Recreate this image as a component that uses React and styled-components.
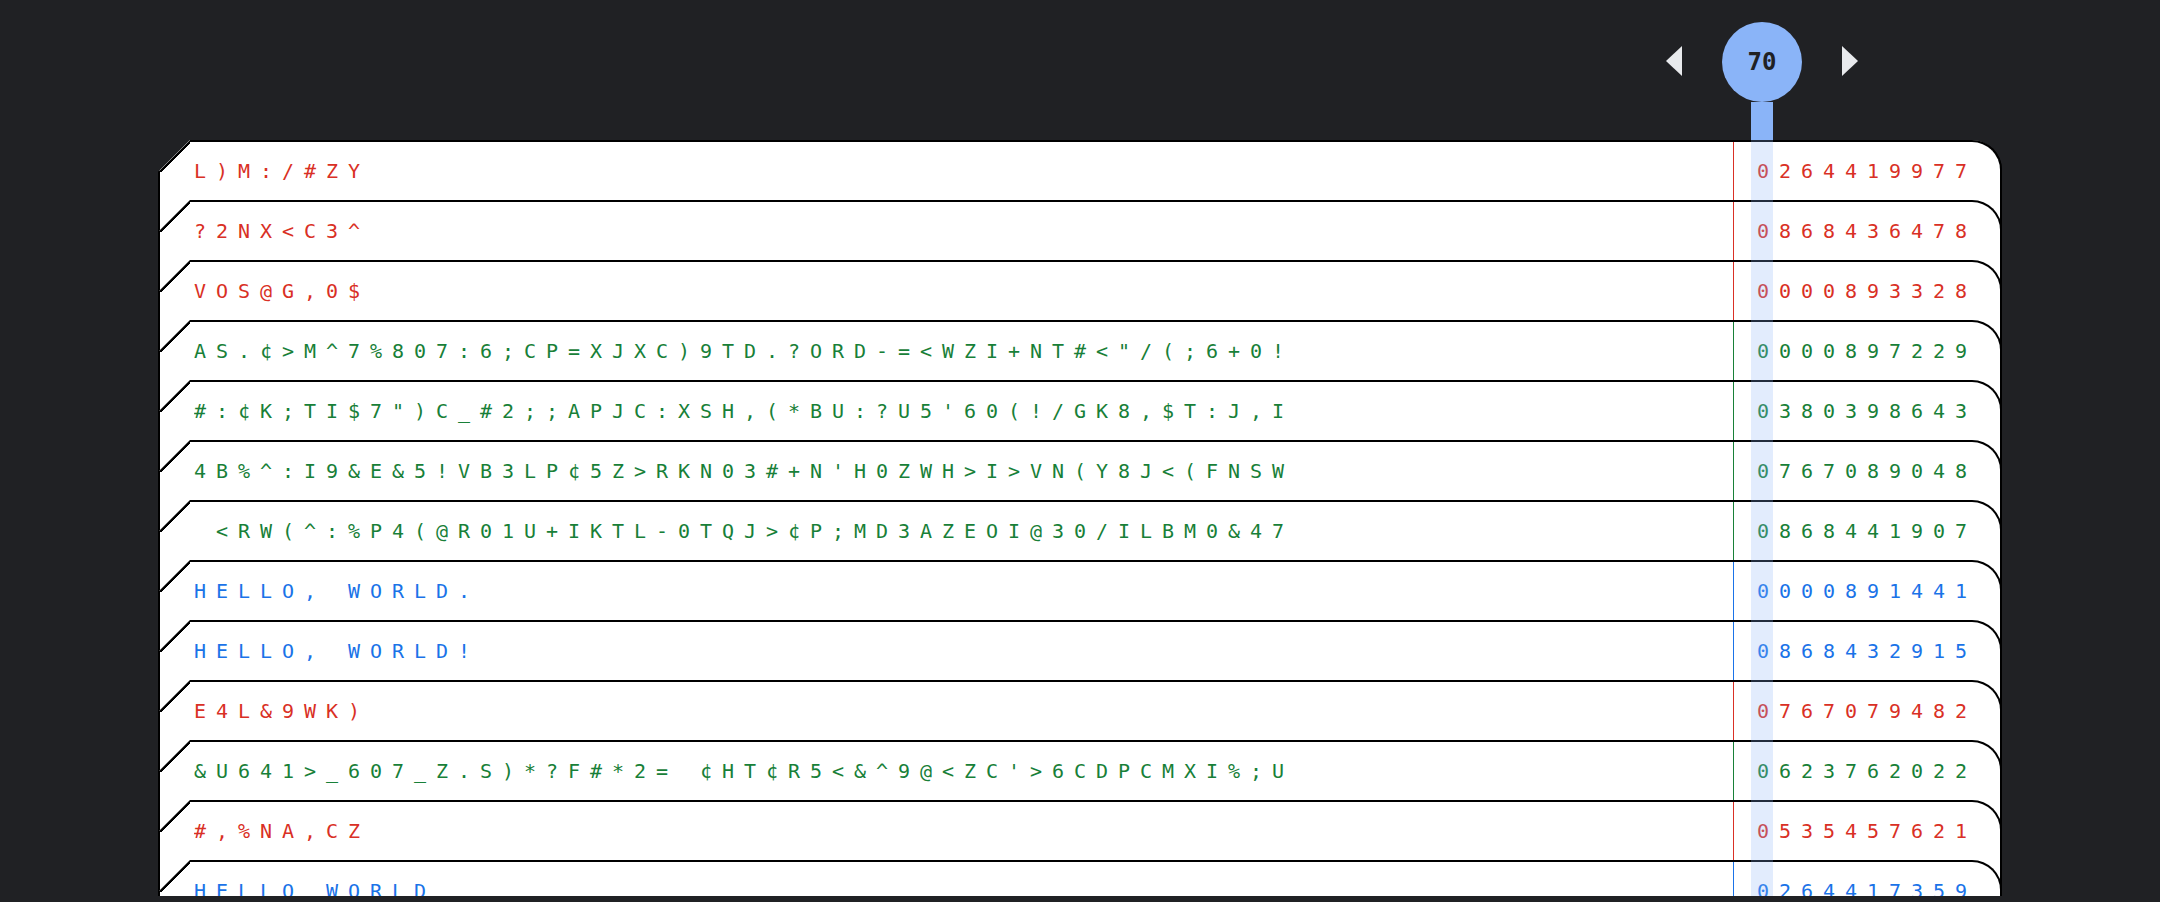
import React from "react";
import styled, { createGlobalStyle } from "styled-components";

const tones = {
  red: "#d93025",
  green: "#188038",
  blue: "#1a73e8",
};

const rows = [
  { text: "L)M:/#ZY", num: "0264419977", tone: "red" },
  { text: "?2NX<C3^", num: "0868436478", tone: "red" },
  { text: "VOS@G,0$", num: "0000893328", tone: "red" },
  { text: "AS.¢>M^7%807:6;CP=XJXC)9TD.?ORD-=<WZI+NT#<\"/(;6+0!", num: "0000897229", tone: "green" },
  { text: "#:¢K;TI$7\")C_#2;;APJC:XSH,(*BU:?U5'60(!/GK8,$T:J,I", num: "0380398643", tone: "green" },
  { text: "4B%^:I9&E&5!VB3LP¢5Z>RKN03#+N'H0ZWH>I>VN(Y8J<(FNSW", num: "0767089048", tone: "green" },
  { text: " <RW(^:%P4(@R01U+IKTL-0TQJ>¢P;MD3AZEOI@30/ILBM0&47", num: "0868441907", tone: "green" },
  { text: "HELLO, WORLD.", num: "0000891441", tone: "blue" },
  { text: "HELLO, WORLD!", num: "0868432915", tone: "blue" },
  { text: "E4L&9WK)", num: "0767079482", tone: "red" },
  { text: "&U641>_607_Z.S)*?F#*2= ¢HT¢R5<&^9@<ZC'>6CDPCMXI%;U", num: "0623762022", tone: "green" },
  { text: "#,%NA,CZ", num: "0535457621", tone: "red" },
  { text: "HELLO WORLD", num: "0264417359", tone: "blue" },
];

const GlobalStyle = createGlobalStyle`
  html, body {
    margin: 0;
    padding: 0;
    background: #202124;
    overflow: hidden;
  }
`;

const Page = styled.div`
  height: 896px;
  overflow: hidden;
  background: #202124;
  font-family: "DejaVu Sans Mono", "Liberation Mono", monospace;
`;

const Toolbar = styled.header`
  height: 140px;
  box-sizing: border-box;
  display: flex;
  justify-content: flex-end;
  align-items: flex-start;
  gap: 40px;
  padding-right: 302px;
`;

const Arrow = styled.button`
  width: 0;
  height: 0;
  padding: 0;
  margin-top: 46px;
  background: none;
  cursor: pointer;
  border-top: 15px solid transparent;
  border-bottom: 15px solid transparent;
  border-left: ${(p) => (p.$dir === "right" ? "16px solid #e8eaed" : "0")};
  border-right: ${(p) => (p.$dir === "left" ? "16px solid #e8eaed" : "0")};
`;

const Pin = styled.div`
  display: flex;
  flex-direction: column;
  align-items: center;
  margin-top: 22px;
`;

const Bubble = styled.div`
  width: 80px;
  height: 80px;
  border-radius: 50%;
  background: #8ab4f8;
  display: flex;
  align-items: center;
  justify-content: center;
  color: #202124;
  font-size: 24px;
  font-weight: 700;
`;

const Stem = styled.div`
  width: 22px;
  height: 38px;
  background: #8ab4f8;
`;

const Body = styled.div`
  position: relative;
`;

const Sheet = styled.div`
  margin: 0 158px;
  background: #fff;
  border-left: 2px solid #000;
  border-right: 2px solid #000;
  border-top-right-radius: 30px;
  clip-path: polygon(32px 0, 100% 0, 100% 100%, 0 100%, 0 32px);
`;

const Row = styled.div`
  height: 60px;
  box-sizing: border-box;
  display: flex;
  align-items: stretch;
  margin: 0 -2px;
  padding: 0 23px 0 34px;
  border: 2px solid #000;
  border-bottom: 0;
  border-top-right-radius: 30px;
  background:
    linear-gradient(135deg, transparent 50%, #000 50%, #000 calc(50% + 2.6px), transparent calc(50% + 2.6px)) 0 0 / 32px 32px no-repeat border-box,
    #fff;
  clip-path: polygon(32px 0, 100% 0, 100% 100%, 0 100%, 0 32px);
  color: ${(p) => tones[p.$tone]};
  font-size: 20px;
  letter-spacing: 9.96px;
  white-space: pre;
`;

const Text = styled.span`
  flex: 1;
  align-self: center;
  overflow: hidden;
`;

const Divider = styled.span`
  width: 1px;
  margin-right: 23px;
  background: ${(p) => tones[p.$tone]};
`;

const Num = styled.span`
  width: 220px;
  align-self: center;
`;

const Cursor = styled.div`
  position: absolute;
  top: 0;
  bottom: 0;
  left: 1751px;
  width: 22px;
  background: rgba(138, 180, 248, 0.25);
  pointer-events: none;
`;

export default function App() {
  return (
    <Page>
      <GlobalStyle />
      <Toolbar>
        <Arrow $dir="left" aria-label="previous" />
        <Pin>
          <Bubble>70</Bubble>
          <Stem />
        </Pin>
        <Arrow $dir="right" aria-label="next" />
      </Toolbar>
      <Body>
        <Sheet>
          {rows.map((r, i) => (
            <Row key={i} $tone={r.tone}>
              <Text>{r.text}</Text>
              <Divider $tone={r.tone} />
              <Num>{r.num}</Num>
            </Row>
          ))}
        </Sheet>
        <Cursor />
      </Body>
    </Page>
  );
}
